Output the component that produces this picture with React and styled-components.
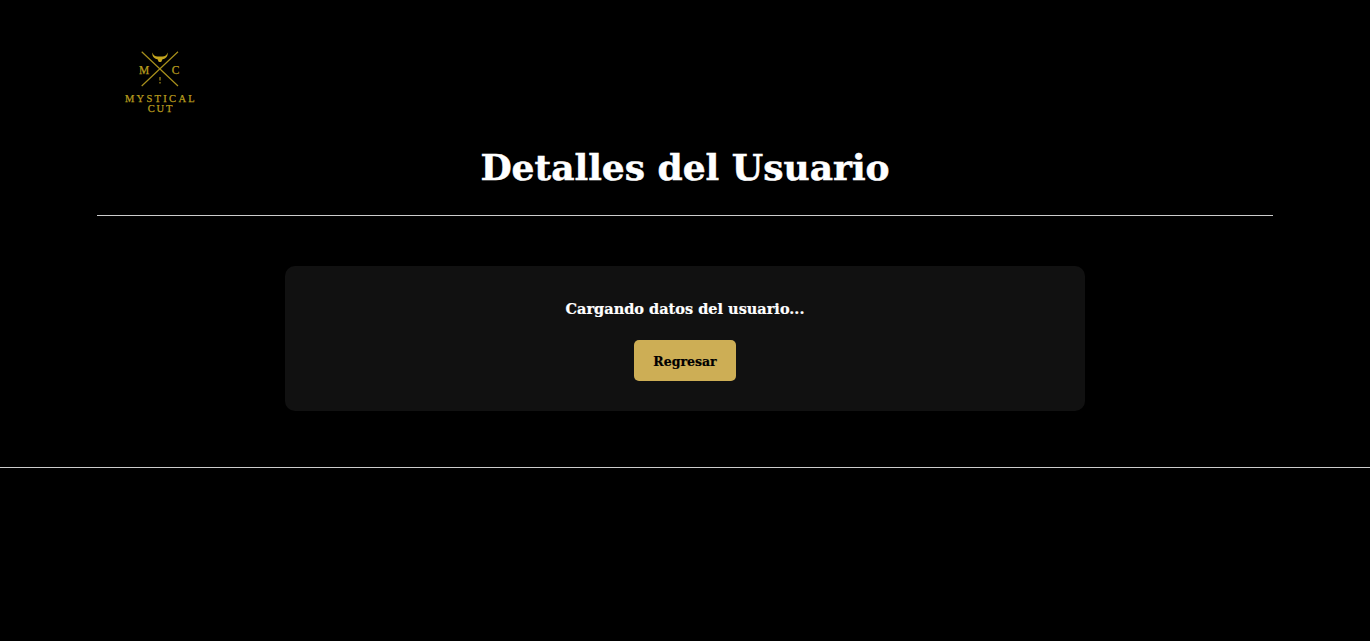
import React from "react";
import styled, { createGlobalStyle } from "styled-components";

const GlobalStyle = createGlobalStyle`
  html, body {
    margin: 0;
    padding: 0;
    background: #000;
    color: #fff;
    font-family: "DejaVu Serif", "Liberation Serif", serif;
  }
`;

const Page = styled.div`
  min-height: 641px;
  background: #000;
`;

const Header = styled.header`
  display: flex;
  align-items: center;
  height: 142px;
  padding: 0 0 0 120px;
`;

const LogoBox = styled.svg`
  display: block;
  width: 80px;
  height: 70px;
  margin-top: 22px;
  overflow: visible;
`;

const Main = styled.main`
  padding: 0 97px;
`;

const Title = styled.h1`
  margin: 0;
  padding: 2px 0 24px;
  height: 47px;
  line-height: 47px;
  text-align: center;
  font-size: 36px;
  font-weight: 700;
  color: #fff;
  -webkit-text-stroke: 0.5px #fff;
  border-bottom: 1px solid #ccc;
`;

const Card = styled.section`
  width: 800px;
  height: 145px;
  box-sizing: border-box;
  margin: 50px auto 56px;
  padding: 32px 0 0;
  background: #111;
  border-radius: 10px;
  display: flex;
  flex-direction: column;
  align-items: center;
`;

const Message = styled.p`
  margin: 0 0 20px;
  font-size: 14.5px;
  line-height: 22px;
  font-weight: 700;
  color: #fff;
  -webkit-text-stroke: 0.2px #fff;
`;

const BackButton = styled.button`
  width: 102px;
  height: 41px;
  padding: 1px 0 0;
  border: none;
  border-radius: 5px;
  background: #cdae55;
  color: #000;
  font-family: inherit;
  font-size: 12.5px;
  font-weight: 700;
  -webkit-text-stroke: 0.2px #000;
`;

const Divider = styled.hr`
  margin: 0;
  border: none;
  border-top: 1px solid #ccc;
`;

function Logo() {
  return (
    <LogoBox viewBox="0 0 80 70">
      <g stroke="#a8901c" strokeWidth="1.2" fill="none">
        <line x1="21.7" y1="4.7" x2="58" y2="39" />
        <line x1="58" y1="4.7" x2="21.7" y2="39" />
      </g>
      <path
        d="M32.5 5.500c.5 2.500 2.500 4 5 4h5c2.500 0 4.500-1.500 5-4 .8 3.700-1.500 6.200-5 6.800l-1.300 2.700h-2.400l-1.300-2.700c-3.500-.6-5.800-3.100-5-6.800z"
        fill="#c4a51e"
      />
      <rect x="39.4" y="30" width="1.2" height="3.500" fill="#a8901c" />
      <rect x="39.4" y="35" width="1.2" height="1.500" fill="#a8901c" />
      <g
        fill="#b89c1e"
        stroke="#b89c1e"
        strokeWidth="0.25"
        fontFamily="Liberation Serif, serif"
        textAnchor="middle"
      >
        <text x="24" y="26.500" fontSize="11.500">M</text>
        <text x="55.500" y="26.500" fontSize="11.500">C</text>
        <text x="41" y="54.500" fontSize="10.500" letterSpacing="2.300">MYSTICAL</text>
        <text x="41" y="64.500" fontSize="10.500" letterSpacing="1.800">CUT</text>
      </g>
    </LogoBox>
  );
}

export default function App() {
  return (
    <>
      <GlobalStyle />
      <Page>
        <Header>
          <Logo />
        </Header>
        <Main>
          <Title>Detalles del Usuario</Title>
          <Card>
            <Message>Cargando datos del usuario...</Message>
            <BackButton>Regresar</BackButton>
          </Card>
        </Main>
        <Divider />
      </Page>
    </>
  );
}
